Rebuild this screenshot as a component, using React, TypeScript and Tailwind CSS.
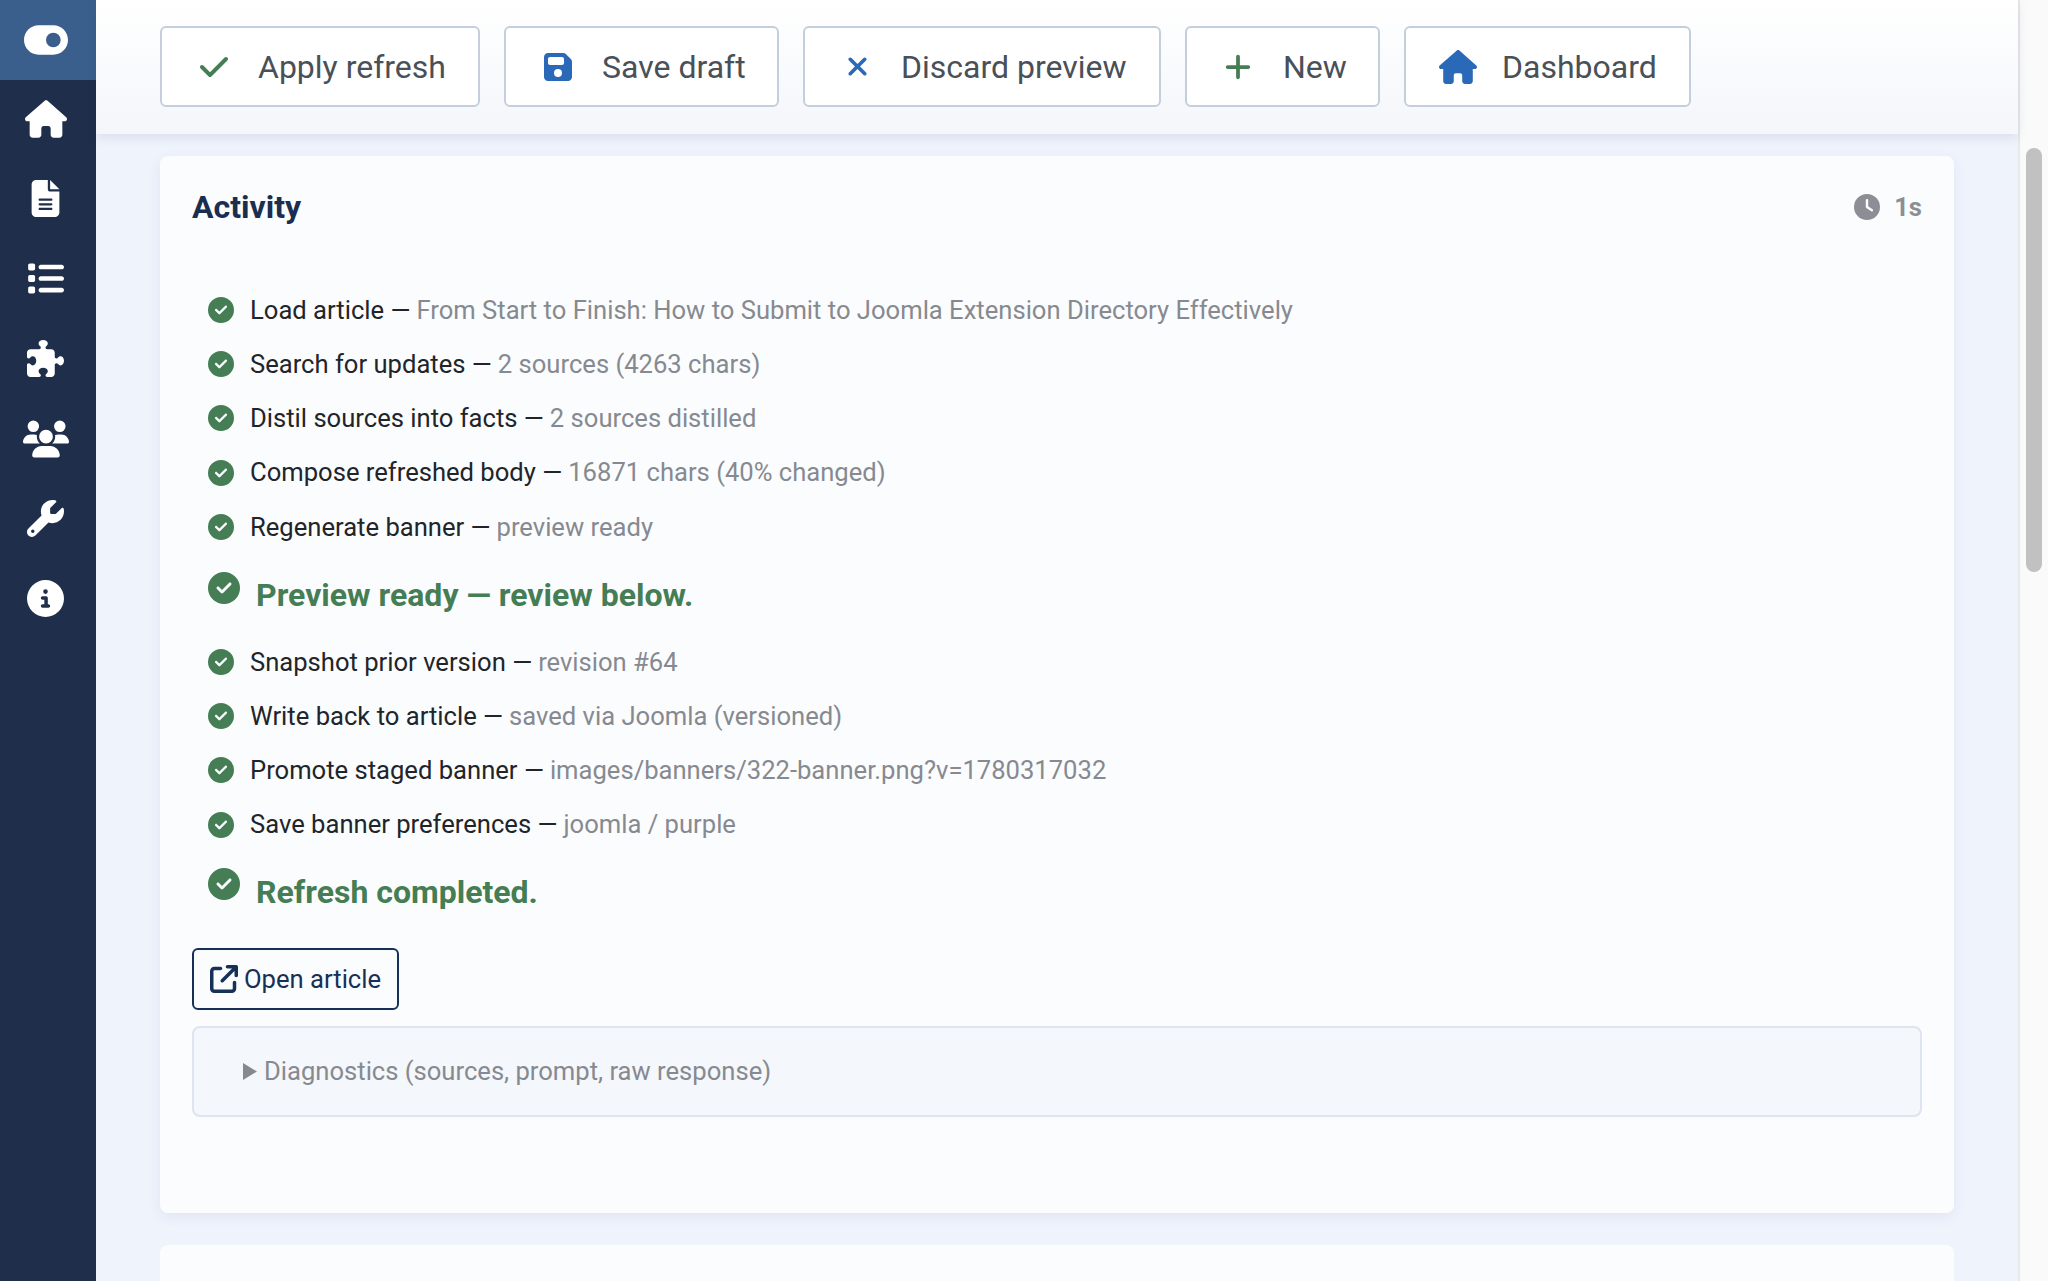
import React from "react";
import {
  FaHouse, FaFileLines, FaList, FaPuzzlePiece, FaUsers, FaWrench, FaCircleInfo, FaToggleOn,
  FaCheck, FaFloppyDisk, FaXmark, FaPlus, FaClock, FaCircleCheck, FaArrowUpRightFromSquare,
} from "react-icons/fa6";

const nav = [
  { I: FaHouse, s: 42 },
  { I: FaFileLines, s: 37 },
  { I: FaList, s: 37 },
  { I: FaPuzzlePiece, s: 37 },
  { I: FaUsers, s: 46 },
  { I: FaWrench, s: 37 },
  { I: FaCircleInfo, s: 37 },
];

const tools = [
  { label: "Apply refresh", I: FaCheck, color: "text-[#457d54]", w: "w-[320px]", icon: 32, box: "w-[60px]", pad: "pl-[36px]" },
  { label: "Save draft", I: FaFloppyDisk, color: "text-[#2a69b8]", w: "w-[275px]", icon: 32, box: "w-[60px]", pad: "pl-[36px]" },
  { label: "Discard preview", I: FaXmark, color: "text-[#2a69b8]", w: "w-[358px]", icon: 29, box: "w-[58.5px]", pad: "pl-[37.5px]" },
  { label: "New", I: FaPlus, color: "text-[#457d54]", w: "w-[195px]", icon: 30, box: "w-[60px]", pad: "pl-[36px]" },
  { label: "Dashboard", I: FaHouse, color: "text-[#2a69b8]", w: "w-[287px]", icon: 38, box: "w-[63px]", pad: "pl-[33px]" },
];

const first = [
  ["Load article", "From Start to Finish: How to Submit to Joomla Extension Directory Effectively"],
  ["Search for updates", "2 sources (4263 chars)"],
  ["Distil sources into facts", "2 sources distilled"],
  ["Compose refreshed body", "16871 chars (40% changed)"],
  ["Regenerate banner", "preview ready"],
];
const second = [
  ["Snapshot prior version", "revision #64"],
  ["Write back to article", "saved via Joomla (versioned)"],
  ["Promote staged banner", "images/banners/322-banner.png?v=1780317032"],
  ["Save banner preferences", "joomla / purple"],
];

function Row({ a, b }: { a: string; b: string }) {
  return (
    <div className="flex h-[54.2px] items-center pl-[16px]">
      <FaCircleCheck className="mr-[16px] shrink-0 text-[#457d54]" size={26} />
      <span className="text-[#212529]">{a} — </span>
      <span className="ml-[6px] text-[#868a90]">{b}</span>
    </div>
  );
}

function Done({ text, h, iconTop, textTop }: { text: string; h: string; iconTop: string; textTop: string }) {
  return (
    <div className={`flex items-start pl-[16px] ${h}`}>
      <FaCircleCheck className={`mr-[16px] shrink-0 text-[#457d54] ${iconTop}`} size={32} />
      <span className={`text-[32px] font-bold leading-[48px] text-[#457d54] ${textTop}`}>{text}</span>
    </div>
  );
}

export default function App() {
  return (
    <div className="flex h-[1281px] w-[2048px] overflow-hidden bg-[#eff3fc] font-['Roboto',sans-serif] text-[25.6px]">
      <aside className="w-[96px] shrink-0 bg-[#1f2e4a]">
        <div className="flex h-[80px] items-center justify-center bg-[#3b5f8d] pr-[4px] text-white">
          <FaToggleOn size={44} />
        </div>
        {nav.map(({ I, s }, i) => (
          <div key={i} className="flex h-[80px] items-center justify-center pb-[3px] pr-[5px] text-white">
            <I size={s} />
          </div>
        ))}
      </aside>

      <main className="flex min-w-0 flex-1 flex-col">
        <div className="z-10 flex h-[134px] shrink-0 items-start gap-[24px] bg-gradient-to-b from-white to-[#f4f6fa] pl-[64px] pt-[26px] shadow-[0_4px_10px_rgba(40,60,110,0.10)]">
          {tools.map(({ label, I, color, w, icon, box, pad }) => (
            <div
              key={label}
              className={`flex h-[81px] shrink-0 items-center rounded-[6px] border-2 border-[#c4cfdd] bg-white text-[32px] text-[#495057] ${w} ${pad}`}
            >
              <span className={`flex ${box} shrink-0 items-center`}>
                <I className={color} size={icon} />
              </span>
              {label}
            </div>
          ))}
        </div>

        <div className="flex flex-col gap-[32px] pl-[64px] pr-[64px] pt-[22px]">
          <section className="h-[1057px] rounded-[8px] bg-[#fbfcfe] px-[32px] pt-[32px] shadow-[0_4px_14px_rgba(40,60,110,0.07)]">
            <div className="flex h-[38px] items-center justify-between">
              <h2 className="text-[32px] font-bold text-[#1c2e4f]">Activity</h2>
              <div className="flex items-center gap-[14px] text-[25.6px] font-bold text-[#8b8e94]">
                <FaClock size={26} />
                1s
              </div>
            </div>
            <div className="mt-[57px]">
              {first.map(([a, b]) => <Row key={a} a={a} b={b} />)}
            </div>
            <Done text="Preview ready — review below." h="h-[81px]" iconTop="mt-[18px]" textTop="mt-[17px]" />
            <div>
              {second.map(([a, b]) => <Row key={a} a={a} b={b} />)}
            </div>
            <Done text="Refresh completed." h="h-[96px]" iconTop="mt-[16px]" textTop="mt-[16px]" />
            <div className="inline-flex h-[62px] items-center gap-[6px] rounded-[6px] border-2 border-[#173057] pl-[16px] pr-[16px] pt-[1px] text-[#173057]">
              <FaArrowUpRightFromSquare size={28} />
              Open article
            </div>
            <div className="mt-[16.5px] flex h-[91px] items-center rounded-[8px] border-2 border-[#dde5f2] bg-[#f4f7fb] pl-[49px] text-[#868a90]">
              <svg width="14" height="17" viewBox="0 0 14 17" className="mr-[7px]">
                <path d="M0 0L14 8.5L0 17Z" fill="#868a90" />
              </svg>
              Diagnostics (sources, prompt, raw response)
            </div>
          </section>
          <section className="h-[200px] shrink-0 rounded-[8px] bg-[#fbfcfe]" />
        </div>
      </main>

      <div className="w-[30px] shrink-0 border-l-2 border-[#e8e8e8] bg-[#fafafa] pl-[6px] pt-[148px]">
        <div className="h-[424px] w-[16px] rounded-full bg-[#c1c1c1]" />
      </div>
    </div>
  );
}
